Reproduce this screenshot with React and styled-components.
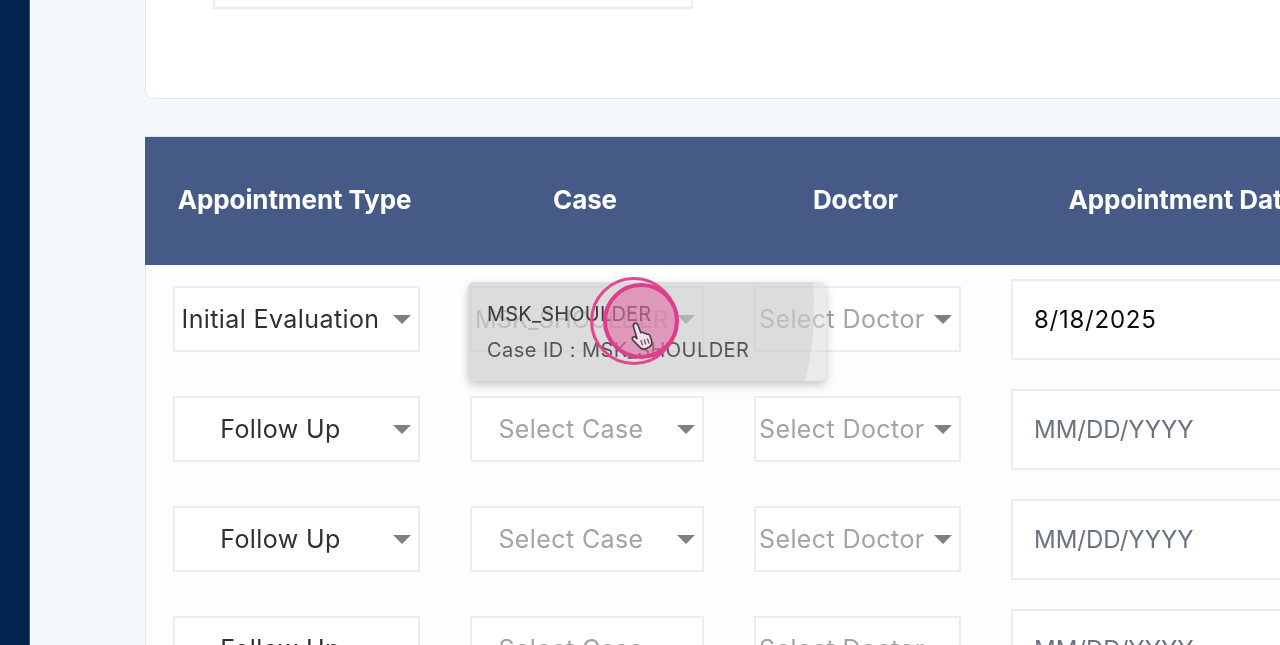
import React from 'react';
import styled, { createGlobalStyle } from 'styled-components';

const GlobalStyle = createGlobalStyle`
  html, body {
    margin: 0;
    height: 100%;
    overflow: hidden;
    background: #f4f7fc;
  }
  * {
    box-sizing: border-box;
  }
`;

const Page = styled.div`
  display: flex;
  width: 1280px;
  height: 645px;
  overflow: hidden;
  font-family: Inter, "Open Sans", sans-serif;
  filter: blur(0.35px);
`;

const Sidebar = styled.aside`
  flex: 0 0 30px;
  background: #04234f;
  border-right: 1px solid #3d5270;
`;

const Main = styled.main`
  flex: 1;
  min-width: 0;
  padding-left: 115px;
`;

const FilterCard = styled.section`
  height: 99px;
  padding-left: 67px;
  background: #fff;
  border: 1px solid #e4e8ef;
  border-top: 0;
  border-right: 0;
  border-bottom-left-radius: 8px;
`;

const FilterInput = styled.div`
  width: 480px;
  height: 9px;
  background: #fff;
  border: 2px solid #ebedf2;
  border-top: 0;
`;

const Table = styled.section`
  width: 1300px;
  margin-top: 37px;
  background: #fdfdfe;
  border-left: 1px solid #e4e8ef;
`;

const Row = styled.div`
  display: grid;
  grid-template-columns: 247px 234px 207px 348px;
  column-gap: 50px;
  padding-left: 27px;
  align-items: center;
`;

const HeadRow = styled(Row)`
  height: 129px;
  padding-bottom: 4px;
  padding-left: 28px;
  margin-left: -1px;
  background: #465a87;
  border-top: 1px solid #dfe4ec;
`;

const HeadCell = styled.div`
  padding-right: 4px;
  color: #fff;
  font-size: 26px;
  font-weight: 700;
  letter-spacing: -0.1px;
  text-align: center;
  white-space: nowrap;
`;

const BodyRow = styled(Row)`
  height: 110px;
  padding-bottom: 2px;
`;

const Cell = styled.div`
  position: relative;
`;

const Select = styled.div`
  display: flex;
  align-items: center;
  height: 66px;
  padding: 0 7px 0 3px;
  background: #fff;
  border: 2px solid #ebedf2;
`;

const SelectLabel = styled.span`
  flex: 1;
  min-width: 0;
  margin-right: 10px;
  color: ${(p) => (p.$muted ? '#a1a4a8' : '#2f3033')};
  font-size: ${(p) => (p.$caps ? '24px' : '25px')};
  letter-spacing: ${(p) => (p.$caps ? '-0.1px' : '0.4px')};
  text-align: center;
  white-space: nowrap;
`;

const Caret = styled.span`
  flex: 0 0 18px;
  height: 0;
  border-left: 9px solid transparent;
  border-right: 9px solid transparent;
  border-top: 9px solid #808080;
`;

const DateInput = styled.div`
  display: flex;
  align-items: center;
  height: 81px;
  padding-left: 21px;
  background: #fff;
  border: 2px solid #ebedf2;
  color: ${(p) => (p.$empty ? '#6b7280' : '#0b0b0b')};
  font-size: 24px;
  letter-spacing: ${(p) => (p.$empty ? '0' : '0.75px')};
`;

const Tooltip = styled.div`
  position: absolute;
  z-index: 2;
  top: -4px;
  left: -2px;
  width: 358px;
  height: 99px;
  padding: 19px;
  overflow: hidden;
  border-radius: 6px;
  background: rgba(215, 215, 215, 0.5);
  box-shadow: 0 4px 10px rgba(0, 0, 0, 0.22);
  white-space: nowrap;

  /* ripple still spreading when the frame was taken */
  &::before {
    content: '';
    position: absolute;
    top: -261px;
    left: -230px;
    width: 576px;
    height: 576px;
    border-radius: 50%;
    background: rgba(190, 190, 190, 0.32);
  }
`;

const TooltipTitle = styled.div`
  position: relative;
  color: #3b3b3b;
  font-size: 20px;
  line-height: 26px;
  letter-spacing: 0.2px;
`;

const TooltipSub = styled.div`
  position: relative;
  margin-top: 10px;
  color: #555;
  font-size: 20px;
  line-height: 26px;
  letter-spacing: 0.45px;
`;

const ClickRing = styled.div`
  position: absolute;
  z-index: 3;
  top: -9px;
  left: 120px;
  width: 88px;
  height: 88px;
  border: 3px solid #e2468f;
  border-radius: 50%;
`;

const ClickDot = styled.div`
  position: absolute;
  top: 3px;
  left: 10px;
  width: 76px;
  height: 76px;
  border: 4px solid #dd3d8c;
  border-radius: 50%;
  background: rgba(222, 110, 165, 0.62);
`;

const Hand = styled.svg`
  position: absolute;
  top: 41px;
  left: 35px;
  width: 26px;
  height: 32px;
`;

const HandCursor = () => (
  <Hand viewBox="0 0 28 34">
    <path
      d="M7 2.5c1.6-.8 3.2.1 3.800 1.800l3 8 .5-.2c1.300-.5 2.600-.1 3.200 1 1.200-.4 2.400 0 3 1 1.400-.3 2.600.3 3.100 1.600l1.600 4.600c1.100 3.400-.2 6.400-2.900 7.800l-2.500 1.200c-2.800 1.200-5.600.6-7.500-1.700L5.200 20.300c-.9-1.100-.8-2.400.1-3.100 1-.7 2.200-.5 3.200.4l1.200 1.100L6 6.200C5.500 4.700 5.800 3.200 7 2.500z"
      fill="#f6dfe9"
      stroke="#4a3a42"
      strokeWidth="1.700"
      strokeLinejoin="round"
    />
    <path d="M14 21l1.500 4.500M17.500 20l1.500 4.500M21 19l1.500 4.500" stroke="#6a5a62" strokeWidth="1.500" strokeLinecap="round" />
  </Hand>
);

const SelectBox = ({ label, muted, caps }) => (
  <Select>
    <SelectLabel $muted={muted} $caps={caps}>{label}</SelectLabel>
    <Caret />
  </Select>
);

const rows = [
  { type: 'Initial Evaluation', caseLabel: 'MSK_SHOULDER', date: '8/18/2025', open: true },
  { type: 'Follow Up', caseLabel: 'Select Case' },
  { type: 'Follow Up', caseLabel: 'Select Case' },
  { type: 'Follow Up', caseLabel: 'Select Case' },
];

const App = () => (
  <>
    <GlobalStyle />
    <Page>
      <Sidebar />
      <Main>
        <FilterCard>
          <FilterInput />
        </FilterCard>
        <Table>
          <HeadRow>
            <HeadCell>Appointment Type</HeadCell>
            <HeadCell>Case</HeadCell>
            <HeadCell>Doctor</HeadCell>
            <HeadCell>Appointment Date</HeadCell>
          </HeadRow>
          {rows.map((row, i) => (
            <BodyRow key={i}>
              <Cell>
                <SelectBox label={row.type} />
              </Cell>
              <Cell>
                <SelectBox label={row.caseLabel} muted caps={row.open} />
                {row.open && (
                  <>
                    <Tooltip>
                      <TooltipTitle>MSK_SHOULDER</TooltipTitle>
                      <TooltipSub>Case ID : MSK_SHOULDER</TooltipSub>
                    </Tooltip>
                    <ClickRing>
                      <ClickDot />
                      <HandCursor />
                    </ClickRing>
                  </>
                )}
              </Cell>
              <Cell>
                <SelectBox label="Select Doctor" muted />
              </Cell>
              <Cell>
                <DateInput $empty={!row.date}>{row.date || 'MM/DD/YYYY'}</DateInput>
              </Cell>
            </BodyRow>
          ))}
        </Table>
      </Main>
    </Page>
  </>
);

export default App;
